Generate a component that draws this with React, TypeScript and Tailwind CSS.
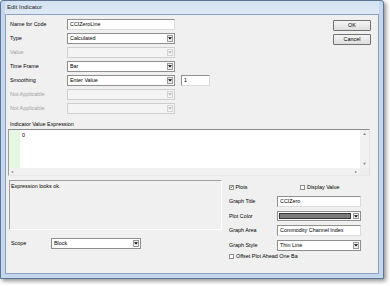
import React from 'react';

const Arrow = ({ disabled }: { disabled?: boolean }) => (
  <div
    className={`m-[1px] flex w-[6px] items-center justify-center border ${
      disabled ? 'border-[#d4d4d4] bg-[#f4f4f4]' : 'border-[#9a9a9a] bg-[#efefef]'
    }`}
  >
    <svg width="4" height="3" viewBox="0 0 4 3">
      <path d="M0 0.3h4L2 2.6z" fill={disabled ? '#b4b4b4' : '#000'} />
    </svg>
  </div>
);

const Select = ({ value, disabled, className = '' }: { value?: string; disabled?: boolean; className?: string }) => (
  <div
    className={`flex h-[11px] items-stretch border ${
      disabled ? 'border-[#cfcfcf] bg-[#f4f4f4]' : 'border-[#8f8f8f] bg-white'
    } ${className}`}
  >
    <span className="flex-1 truncate pl-[2px] leading-[9px]">{value}</span>
    <Arrow disabled={disabled} />
  </div>
);

const Input = ({ value, className = '' }: { value: string; className?: string }) => (
  <div className={`h-[11px] border border-[#8f8f8f] border-r-[#dcdcdc] border-b-[#dcdcdc] bg-white pl-[2px] leading-[9px] ${className}`}>
    {value}
  </div>
);

const Check = ({ checked }: { checked?: boolean }) => (
  <div className="flex h-[5px] w-[5px] items-center justify-center border border-[#8e8e8e] bg-white">
    {checked && (
      <svg width="4" height="4" viewBox="0 0 4 4">
        <path d="M0.4 1.8L1.5 3L3.6 0.6" stroke="#222" strokeWidth="0.9" fill="none" />
      </svg>
    )}
  </div>
);

const Button = ({ label }: { label: string }) => (
  <div className="flex h-[11px] w-[38px] items-center justify-center rounded-[1px] border border-[#707070] bg-gradient-to-b from-[#f4f4f4] to-[#dedede] leading-none">
    {label}
  </div>
);

const rows: { label: string; value?: string; disabled?: boolean; input?: boolean; extra?: string }[] = [
  { label: 'Name for Code', value: 'CCIZeroLine', input: true },
  { label: 'Type', value: 'Calculated' },
  { label: 'Value', disabled: true },
  { label: 'Time Frame', value: 'Bar' },
  { label: 'Smoothing', value: 'Enter Value', extra: '1' },
  { label: 'Not Applicable', disabled: true },
  { label: 'Not Applicable', disabled: true },
];

export default function App() {
  return (
    <div className="h-[286px] w-[390px] bg-white font-['Liberation_Sans',Arial,sans-serif] text-[5.4px] text-black">
      <div className="flex h-[279px] w-[384px] flex-col rounded-t-[3px] border border-[#5f7692] bg-[#c4d7ee] px-[4px] pb-[4px] shadow-[2px_2px_4px_rgba(0,0,0,0.45)]">
        {/* title bar */}
        <div className="flex h-[13px] shrink-0 items-center bg-gradient-to-b from-[#d4e2f2] to-[#dfe9f5] pl-[2px] text-[6px] text-[#1b1b1b]">
          Edit Indicator
        </div>

        {/* client area */}
        <div className="flex flex-1 flex-col border border-[#8ca3bf] bg-[#f0f0f0]">
          {/* top form */}
          <div className="flex pl-[4px] pr-[7px] pt-[4px]">
            <div className="flex flex-col gap-[3px]">
              {rows.map((r, i) => (
                <div key={i} className="flex h-[11px] items-center">
                  <span className={`w-[57px] ${r.disabled ? 'text-[#a2a2a2]' : ''}`}>{r.label}</span>
                  {r.input ? (
                    <Input value={r.value || ''} className="w-[108px]" />
                  ) : (
                    <Select value={r.value} disabled={r.disabled} className="w-[108px]" />
                  )}
                  {r.extra && <Input value={r.extra} className="ml-[6px] w-[29px]" />}
                </div>
              ))}
            </div>
            <div className="ml-auto mt-[1px] flex flex-col gap-[3px]">
              <Button label="OK" />
              <Button label="Cancel" />
            </div>
          </div>

          {/* expression */}
          <div className="mt-[6px] pl-[4px] leading-[8px]">Indicator Value Expression</div>
          <div className="ml-[2px] mt-[1px] flex h-[47px] w-[362px] flex-col border border-[#9c9c9c] border-b-[#e6e6e6] border-r-[#e6e6e6] border-t-[#8a8a8a] bg-white">
            <div className="flex flex-1">
              <div className="w-[11px] bg-[#e5f6e3]" />
              <div className="flex-1 pl-[2px] pt-[2px] leading-[7px]">0</div>
              <div className="flex w-[9px] flex-col items-center justify-between bg-[#f1f1f1] py-[2px] text-[4px] leading-[4px] text-[#777]">
                <span>▲</span>
                <span>▼</span>
              </div>
            </div>
            <div className="flex h-[7px] bg-[#f1f1f1] text-[4px] leading-[7px] text-[#777]">
              <span className="pl-[2px]">◂</span>
              <span className="ml-auto pr-[3px]">▸</span>
              <div className="w-[9px] bg-[#ececec]" />
            </div>
          </div>

          {/* bottom */}
          <div className="mt-[4px] flex">
            <div className="ml-[3px] flex w-[213px] flex-col">
              <div className="h-[50px] border border-[#a0a0a0] border-b-white border-r-white pl-[1px] pt-[1px] leading-[8px]">
                Expression looks ok.
              </div>
              <div className="ml-[2px] mt-[8px] flex h-[10px] items-center">
                <span className="w-[40px]">Scope</span>
                <Select value="Block" className="h-[10px] w-[90px]" />
              </div>
            </div>

            <div className="ml-[7px] flex flex-col">
              <div className="mt-[3px] flex h-[8px] items-center">
                <div className="flex w-[71px] items-center gap-[1.5px]">
                  <Check checked />
                  <span>Plots</span>
                </div>
                <div className="flex items-center gap-[2px]">
                  <Check />
                  <span>Display Value</span>
                </div>
              </div>
              <div className="mt-[5px] flex h-[10px] items-center">
                <span className="w-[48px]">Graph Title</span>
                <Input value="CCIZero" className="h-[10px] w-[84px] leading-[8px]" />
              </div>
              <div className="mt-[5px] flex h-[10px] items-center">
                <span className="w-[48px]">Plot Color</span>
                <div className="flex h-[10px] w-[84px] items-stretch border border-[#8f8f8f] bg-white">
                  <div className="m-[1px] flex-1 border border-[#333] bg-[#7c7c7c]" />
                  <Arrow />
                </div>
              </div>
              <div className="mt-[4px] flex h-[10px] items-center">
                <span className="w-[48px]">Graph Area</span>
                <Input value="Commodity Channel Index" className="h-[10px] w-[84px] leading-[8px]" />
              </div>
              <div className="mt-[5px] flex h-[10px] items-center">
                <span className="w-[48px]">Graph Style</span>
                <Select value="Thin Line" className="h-[10px] w-[84px]" />
              </div>
              <div className="mt-[2px] flex h-[8px] items-center gap-[2px]">
                <Check />
                <span>Offset Plot Ahead One Ba</span>
              </div>
            </div>
          </div>
        </div>
      </div>
    </div>
  );
}
